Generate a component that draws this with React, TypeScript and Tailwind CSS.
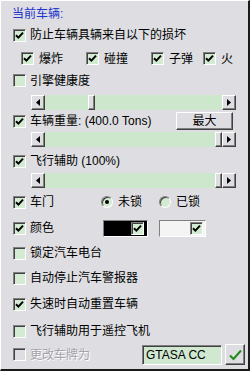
import clsx from "clsx";

const font = { fontFamily: '"Liberation Sans", "Noto Sans CJK SC", sans-serif' };

function Tick({ color = "#000" }: { color?: string }) {
  return (
    <svg width="9" height="9" viewBox="0 0 9 9">
      <path d="M1 4.2 L3.4 6.6 L8 1.6" stroke={color} strokeWidth="2" fill="none" />
    </svg>
  );
}

function Box({ checked, disabled }: { checked?: boolean; disabled?: boolean }) {
  return (
    <span
      className={clsx(
        "flex h-[13px] w-[13px] shrink-0 items-center justify-center border border-t-[#808080] border-l-[#808080] border-b-white border-r-white shadow-[inset_1px_1px_0_#404040]",
        disabled ? "bg-[#dedee2]" : "bg-[#d3ebd3]"
      )}
    >
      {checked && <Tick />}
    </span>
  );
}

function Check({ label, checked, disabled }: { label: string; checked?: boolean; disabled?: boolean }) {
  return (
    <div className="flex items-center gap-[4px] pl-[12px]">
      <Box checked={checked} disabled={disabled} />
      <span className={clsx("whitespace-nowrap", disabled ? "text-[#a4a4a8] [text-shadow:1px_1px_0_#fff]" : "text-black")}>
        {label}
      </span>
    </div>
  );
}

function Radio({ label, on }: { label: string; on?: boolean }) {
  return (
    <div className="flex items-center gap-[5px]">
      <span className="flex h-[12px] w-[12px] shrink-0 items-center justify-center rounded-full border border-t-[#808080] border-l-[#808080] border-b-white border-r-white bg-[#d3ebd3] shadow-[inset_1px_1px_0_#404040]">
        {on && <span className="h-[4px] w-[4px] rounded-full bg-black" />}
      </span>
      <span className="whitespace-nowrap">{label}</span>
    </div>
  );
}

function Arrow({ dir }: { dir: "l" | "r" }) {
  return (
    <span className="flex h-[15px] w-[14px] shrink-0 items-center justify-center border border-t-white border-l-white border-b-[#404040] border-r-[#404040] bg-[#dedee2] shadow-[inset_-1px_-1px_0_#808080]">
      <svg width="4" height="7" viewBox="0 0 4 7">
        {dir === "l" ? <path d="M4 0 L0 3.5 L4 7 Z" fill="#000" /> : <path d="M0 0 L4 3.5 L0 7 Z" fill="#000" />}
      </svg>
    </span>
  );
}

function Slider({ end }: { end?: boolean }) {
  return (
    <div className="ml-[30px] flex h-[15px] w-[205px]">
      <Arrow dir="l" />
      <div className={clsx("flex flex-1 bg-[#cde7cd]", end && "justify-end")}>
        <span
          className={clsx(
            "h-[15px] w-[7px] border border-t-white border-l-white border-b-[#404040] border-r-[#404040] bg-[#dedee2] shadow-[inset_-1px_-1px_0_#808080]",
            !end && "ml-[43px]"
          )}
        />
      </div>
      <Arrow dir="r" />
    </div>
  );
}

export default function App() {
  return (
    <div
      style={font}
      className="flex h-[371px] w-[250px] flex-col border-t border-l border-t-white border-l-white border-r-2 border-b-2 border-r-[#1a1a1a] border-b-[#1a1a1a] bg-[#dedee2] text-[12px] leading-none text-black"
    >
      <div className="flex h-[20px] items-center pl-[11px] mt-[3px] text-[#2233cc]">当前车辆:</div>

      <div className="flex h-[22px] items-center">
        <Check label="防止车辆具辆来自以下的损坏" checked />
      </div>

      <div className="flex h-[25px] items-center pl-[20px]">
        {[
          ["爆炸", "w-[65px]"],
          ["碰撞", "w-[65px]"],
          ["子弹", "w-[52px]"],
          ["火", ""],
        ].map(([t, w]) => (
          <div key={t} className={clsx("flex items-center gap-[5px]", w)}>
            <Box checked />
            <span>{t}</span>
          </div>
        ))}
      </div>

      <div className="flex h-[19px] items-center">
        <Check label="引擎健康度" />
      </div>

      <div className="mt-[5px]">
        <Slider />
      </div>

      <div className="flex h-[22px] items-center pr-[15px]">
        <Check label="车辆重量: (400.0 Tons)" checked />
        <button className="ml-auto flex h-[18px] w-[57px] items-center justify-center border border-t-white border-l-white border-b-[#404040] border-r-[#404040] bg-[#dedee2] shadow-[inset_-1px_-1px_0_#808080]">
          最大
        </button>
      </div>

      <Slider end />

      <div className="mt-[2px] flex h-[24px] items-center">
        <Check label="飞行辅助 (100%)" checked />
      </div>

      <Slider end />

      <div className="flex h-[28px] items-center">
        <div className="w-[100px]">
          <Check label="车门" checked />
        </div>
        <div className="w-[58px]">
          <Radio label="未锁" on />
        </div>
        <Radio label="已锁" />
      </div>

      <div className="flex h-[24px] items-center">
        <div className="w-[102px]">
          <Check label="颜色" checked />
        </div>
        <div className="flex h-[17px] w-[45px] items-center justify-end border border-t-[#808080] border-l-[#808080] border-b-white border-r-white bg-black pr-[3px]">
          <Box checked />
        </div>
        <div className="ml-[11px] flex h-[17px] w-[47px] items-center justify-end border border-t-[#808080] border-l-[#808080] border-b-white border-r-white bg-[#f4f4f4] pr-[2px]">
          <Box checked />
        </div>
      </div>

      <div className="flex h-[26px] items-center">
        <Check label="锁定汽车电台" />
      </div>
      <div className="flex h-[24px] items-center">
        <Check label="自动停止汽车警报器" />
      </div>
      <div className="flex h-[28px] items-center">
        <Check label="失速时自动重置车辆" checked />
      </div>
      <div className="flex h-[26px] items-center">
        <Check label="飞行辅助用于遥控飞机" />
      </div>

      <div className="flex h-[21px] items-center">
        <div className="w-[141px]">
          <Check label="更改车牌为" disabled />
        </div>
        <div className="flex h-[20px] w-[80px] items-center border border-t-[#808080] border-l-[#808080] border-b-white border-r-white bg-[#cfe8cf] pl-[3px] shadow-[inset_1px_1px_0_#404040]">
          GTASA CC
        </div>
        <button className="ml-[3px] flex h-[21px] w-[20px] items-center justify-center border border-t-white border-l-white border-b-[#404040] border-r-[#404040] bg-[#dedee2] shadow-[inset_-1px_-1px_0_#808080]">
          <svg width="13" height="12" viewBox="0 0 13 12">
            <path d="M1 6.5 L4.5 10 L12 1.5" stroke="#1c8a1c" strokeWidth="2" fill="none" />
          </svg>
        </button>
      </div>
    </div>
  );
}
